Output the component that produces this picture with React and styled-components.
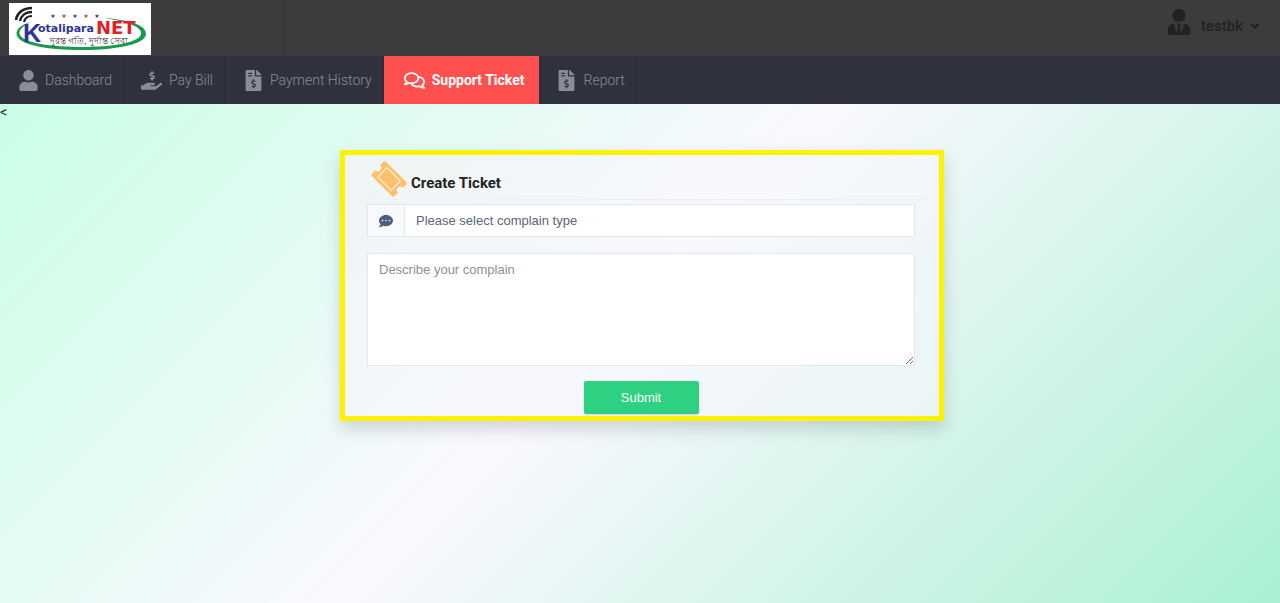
import styled, { createGlobalStyle, css } from "styled-components";
import {
  FaUser,
  FaUserTie,
  FaHandHoldingUsd,
  FaFileInvoiceDollar,
  FaRegComments,
  FaAngleDown,
  FaCommentDots,
} from "react-icons/fa";

const links = [
  { label: "Dashboard", icon: FaUser },
  { label: "Pay Bill", icon: FaHandHoldingUsd },
  { label: "Payment History", icon: FaFileInvoiceDollar },
  { label: "Support Ticket", icon: FaRegComments, active: true },
  { label: "Report", icon: FaFileInvoiceDollar },
];

const stars = [
  { x: 44, color: "#3b3fa8" },
  { x: 55, color: "#e0393b" },
  { x: 66, color: "#3b3fa8" },
  { x: 77, color: "#e0393b" },
  { x: 88, color: "#3b3fa8" },
];

const Logo = () => (
  <svg width="142" height="52" viewBox="0 0 142 52" role="img" aria-label="Kotalipara NET">
    <rect width="142" height="52" fill="#fff" />
    <path
      d="M22 19C10 22 6 28 8 33C13 43 41 47 73 47C108 47 137 41 137 31C137 24 128 18 96 15C124 20 133 25 132 31C130 40 103 44 73 44C42 44 15 40 11 32C9 28 13 23 22 19Z"
      fill="#179a4b"
    />
    <g fill="none" stroke="#222">
      <path d="M7 17C8 10 14 5 23 5" strokeWidth="2.6" />
      <path d="M11 18C12 13 16 9 23 9" strokeWidth="2.4" />
      <path d="M15 19C16 15 18 13 23 13" strokeWidth="2.2" />
    </g>
    {stars.map((star) => (
      <path
        key={star.x}
        transform={`translate(${star.x} 13)`}
        d="M0-2.2L.6-.7L2.2-.6L1 .4L1.4 2L0 1.1L-1.4 2L-1 .4L-2.2-.6L-.6-.7Z"
        fill={star.color}
      />
    ))}
    <g fontFamily="'DejaVu Sans', sans-serif" fontWeight="700">
      <text x="14" y="39" fontSize="25" fontFamily="'Liberation Sans', sans-serif" fill="#2d3498">
        K
      </text>
      <text x="29" y="29" fontSize="11" fill="#2d3498">otalipara</text>
      <text x="87" y="31" fontSize="18" fill="#e31e25">NET</text>
    </g>
    <text x="41" y="41" fontSize="9" fill="#333" fontFamily="'Noto Sans', sans-serif">
      দুরন্ত গতি, দুর্দান্ত সেবা
    </text>
  </svg>
);

const TicketIcon = () => (
  <svg width="34" height="34" viewBox="0 0 34 34" aria-hidden="true">
    <g transform="rotate(45 17 17)">
      <path
        d="M3 7H31Q33 7 33 9V13.5A3.5 3.5 0 0 0 33 20.500V25Q33 27 31 27H3Q1 27 1 25V20.500A3.500 3.500 0 0 0 1 13.500V9Q1 7 3 7Z"
        fill="#ffc06e"
      />
      <rect x="7.500" y="10.500" width="19" height="13" rx="1" fill="none" stroke="#fff3df" strokeWidth="1.300" />
    </g>
  </svg>
);

const App = () => {
  return (
    <>
      <GlobalStyle />
      <Header>
        <Brand href="#">
          <Logo />
        </Brand>
        <UserMenu type="button">
          <FaUserTie size={26} />
          <span>testbk</span>
          <FaAngleDown size={14} />
        </UserMenu>
      </Header>
      <Nav>
        {links.map(({ label, icon: Icon, active }) => (
          <NavLink href="#" key={label} $active={active}>
            <IconBox>
              <Icon size={21} />
            </IconBox>
            {label}
          </NavLink>
        ))}
      </Nav>
      <Main>
        <Stray>&lt;</Stray>
        <Card>
          <Title>
            <TicketIcon />
            <span>Create Ticket</span>
          </Title>
          <InputGroup>
            <label htmlFor="type" aria-label="Complain type">
              <FaCommentDots size={14} />
            </label>
            <select id="type" defaultValue="">
              <option value="">Please select complain type</option>
            </select>
          </InputGroup>
          <Description aria-label="Describe your complain" placeholder="Describe your complain" />
          <Submit type="submit">Submit</Submit>
        </Card>
      </Main>
    </>
  );
};

const GlobalStyle = createGlobalStyle`
  * {
    box-sizing: border-box;
  }

  body {
    margin: 0;
    min-height: 100vh;
    font-family: Roboto, sans-serif;
    background: linear-gradient(135deg, #c3ffe1 0%, #f9f8ff 50%, #aaf0d1 100%) no-repeat;
  }
`;

const Header = styled.header`
  display: flex;
  align-items: center;
  justify-content: space-between;
  height: 56px;
  background: #3c3c3c;
`;

const Brand = styled.a`
  display: flex;
  align-items: center;
  width: 285px;
  height: 100%;
  padding: 2px 9px 0;
  border-right: 1px solid #353535;
`;

const UserMenu = styled.button`
  display: flex;
  align-items: center;
  gap: 5px;
  padding: 0 18px 12px 0;
  border: 0;
  background: none;
  color: #222;
  font: 500 15px Roboto, sans-serif;

  span {
    margin: 8px 0 0 4px;
  }

  span + svg {
    margin-top: 8px;
  }
`;

const Nav = styled.nav`
  display: flex;
  height: 48px;
  background: #30313f;
`;

const NavLink = styled.a`
  display: flex;
  align-items: center;
  gap: 5px;
  padding: 0 11px 0 16px;
  border-right: 1px solid #2a2b38;
  color: #8b8c94;
  font-size: 14px;
  font-weight: 300;
  text-decoration: none;

  ${({ $active }) =>
    $active &&
    css`
      padding: 0 13px 0 19px;
      border-color: #ff5050;
      background: #ff5050;
      color: #fff;
      font-weight: 700;
    `}
`;

const IconBox = styled.span`
  display: flex;
  justify-content: center;
  width: 24px;
`;

const Main = styled.main`
  padding: 0 14px 48px 18px;
`;

const Stray = styled.div`
  height: 46px;
  margin-left: -18px;
  color: #222;
  font-size: 14px;
  line-height: 16px;
`;

const Card = styled.form`
  display: flex;
  flex-direction: column;
  max-width: 604px;
  margin: 0 auto;
  padding: 3px 24px 2px 22px;
  border: 5px solid #fff200;
  background: linear-gradient(135deg, #eef5f4 0%, #f7f8fe 50%, #eaf5f4 100%);
  box-shadow: 0 8px 16px rgba(0, 0, 0, 0.15);
`;

const Title = styled.h1`
  display: flex;
  align-items: center;
  gap: 5px;
  height: 42px;
  margin: 0 -13px 4px 0;
  padding: 0 5px;
  border-bottom: 1px solid #edf1f5;
  color: #222;
  font-size: 15px;
  font-weight: 700;
  line-height: 20px;

  svg {
    overflow: visible;
  }

  span {
    padding-top: 8px;
  }
`;

const InputGroup = styled.div`
  display: flex;
  height: 33px;
  border: 1px solid #e2e7ee;
  background: #fff;

  label {
    display: flex;
    align-items: center;
    justify-content: center;
    width: 37px;
    border-right: 1px solid #e2e7ee;
    background: #f7f9fc;
    color: #4f5d80;
  }

  select {
    flex: 1;
    padding: 0 11px;
    border: 0;
    appearance: none;
    background: none;
    color: #5b6478;
    font: 13px "Liberation Sans", sans-serif;
  }
`;

const Description = styled.textarea`
  height: 113px;
  margin: 16px 0 15px;
  padding: 8px 11px;
  border: 1px solid #e2e7ee;
  background: #fff;
  font: 13px "Liberation Sans", sans-serif;
  resize: vertical;

  &::placeholder {
    color: #8a909d;
  }
`;

const Submit = styled.button`
  align-self: center;
  width: 115px;
  height: 33px;
  border: 0;
  border-radius: 2px;
  background: #2dd181;
  box-shadow: 0 1px 2px rgba(0, 0, 0, 0.15);
  color: #fff;
  font: 13px "Liberation Sans", sans-serif;
`;

export default App;
